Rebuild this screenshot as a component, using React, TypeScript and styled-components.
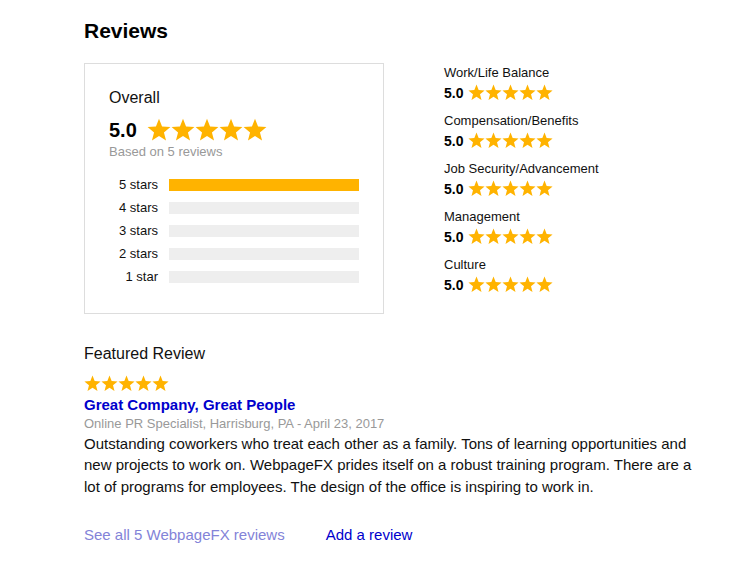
import React from "react";
import styled, { createGlobalStyle } from "styled-components";

const GlobalStyle = createGlobalStyle`
  body {
    margin: 0;
    background: #ffffff;
    font-family: "Liberation Sans", Arial, sans-serif;
    color: #111111;
  }
`;

const STAR = "#ffb300";

const Page = styled.div`
  padding: 19px 0 0 84px;
  width: 620px;
`;

const Heading = styled.h2`
  margin: 0 0 20px;
  font-size: 21px;
  line-height: 24px;
  font-weight: bold;
  color: #000;
`;

const Summary = styled.div`
  display: flex;
  gap: 60px;
  align-items: flex-start;
`;

const OverallCard = styled.div`
  box-sizing: border-box;
  width: 300px;
  height: 251px;
  border: 1px solid #dddddd;
  padding: 25px 24px 0 24px;
`;

const OverallTitle = styled.div`
  font-size: 16px;
  line-height: 18px;
`;

const ScoreRow = styled.div<{ $gap: number }>`
  display: flex;
  align-items: center;
  gap: ${(p) => p.$gap}px;
`;

const BigScore = styled.span`
  font-size: 20px;
  font-weight: bold;
  line-height: 24px;
  color: #000;
`;

const Based = styled.div`
  margin-top: 2px;
  font-size: 13px;
  line-height: 15px;
  color: #999999;
`;

const Bars = styled.div`
  margin-top: 20px;
  display: flex;
  flex-direction: column;
  gap: 11px;
`;

const BarRow = styled.div`
  display: flex;
  align-items: center;
  gap: 11px;
  height: 12px;
`;

const BarLabel = styled.span`
  width: 49px;
  text-align: right;
  font-size: 13px;
  line-height: 12px;
  white-space: nowrap;
`;

const Track = styled.div`
  flex: none;
  width: 190px;
  height: 12px;
  background: #eeeeee;
`;

const Fill = styled.div`
  height: 100%;
  background: ${STAR};
`;

const Categories = styled.div`
  display: flex;
  flex-direction: column;
  gap: 12px;
  padding-top: 2px;
`;

const Category = styled.div`
  display: flex;
  flex-direction: column;
  gap: 3px;
`;

const CategoryName = styled.div`
  font-size: 13px;
  line-height: 16px;
`;

const SmallScore = styled.span`
  font-size: 14px;
  font-weight: bold;
  line-height: 16px;
  color: #000;
`;

const Featured = styled.div`
  margin-top: 30px;
`;

const FeaturedTitle = styled.div`
  font-size: 16px;
  line-height: 19px;
  margin-bottom: 12px;
`;

const ReviewTitle = styled.a`
  display: block;
  margin-top: 3px;
  font-size: 15px;
  font-weight: bold;
  line-height: 19px;
  color: #0000cc;
  text-decoration: none;
`;

const Meta = styled.div`
  margin-top: 1px;
  font-size: 13px;
  line-height: 17px;
  color: #999999;
`;

const Body = styled.p`
  margin: 1px 0 0;
  font-size: 15px;
  line-height: 21.3px;
  width: 620px;
  color: #111;
`;

const Links = styled.div`
  display: flex;
  gap: 41px;
  margin-top: 29px;
`;

const FooterLink = styled.a<{ $muted?: boolean }>`
  font-size: 15px;
  line-height: 17px;
  color: ${(p) => (p.$muted ? "#8383d8" : "#0000cc")};
  text-decoration: none;
`;

const StarRow = styled.span`
  display: flex;
`;

const Star = ({ size }: { size: number }) => (
  <svg width={size} height={size} viewBox="0 0 24 24">
    <path
      fill={STAR}
      d="M12 0.8L15.06 8.59L23.41 9.09L16.95 14.41L19.05 22.51L12 18L4.95 22.51L7.05 14.41L0.59 9.09L8.94 8.59Z"
    />
  </svg>
);

const Stars = ({ size }: { size: number }) => (
  <StarRow>
    {[0, 1, 2, 3, 4].map((i) => (
      <Star key={i} size={size} />
    ))}
  </StarRow>
);

const distribution = [
  { label: "5 stars", pct: 100 },
  { label: "4 stars", pct: 0 },
  { label: "3 stars", pct: 0 },
  { label: "2 stars", pct: 0 },
  { label: "1 star", pct: 0 },
];

const categories = [
  "Work/Life Balance",
  "Compensation/Benefits",
  "Job Security/Advancement",
  "Management",
  "Culture",
];

export default function App() {
  return (
    <>
      <GlobalStyle />
      <Page>
        <Heading>Reviews</Heading>
        <Summary>
          <OverallCard>
            <OverallTitle>Overall</OverallTitle>
            <ScoreRow $gap={10} style={{ marginTop: 11 }}>
              <BigScore>5.0</BigScore>
              <Stars size={24} />
            </ScoreRow>
            <Based>Based on 5 reviews</Based>
            <Bars>
              {distribution.map((d) => (
                <BarRow key={d.label}>
                  <BarLabel>{d.label}</BarLabel>
                  <Track>
                    <Fill style={{ width: `${d.pct}%` }} />
                  </Track>
                </BarRow>
              ))}
            </Bars>
          </OverallCard>
          <Categories>
            {categories.map((c) => (
              <Category key={c}>
                <CategoryName>{c}</CategoryName>
                <ScoreRow $gap={5}>
                  <SmallScore>5.0</SmallScore>
                  <Stars size={17} />
                </ScoreRow>
              </Category>
            ))}
          </Categories>
        </Summary>
        <Featured>
          <FeaturedTitle>Featured Review</FeaturedTitle>
          <Stars size={17} />
          <ReviewTitle href="#">Great Company, Great People</ReviewTitle>
          <Meta>Online PR Specialist, Harrisburg, PA - April 23, 2017</Meta>
          <Body>
            Outstanding coworkers who treat each other as a family. Tons of
            learning opportunities and new projects to work on. WebpageFX
            prides itself on a robust training program. There are a lot of
            programs for employees. The design of the office is inspiring to
            work in.
          </Body>
          <Links>
            <FooterLink href="#" $muted>
              See all 5 WebpageFX reviews
            </FooterLink>
            <FooterLink href="#">Add a review</FooterLink>
          </Links>
        </Featured>
      </Page>
    </>
  );
}
